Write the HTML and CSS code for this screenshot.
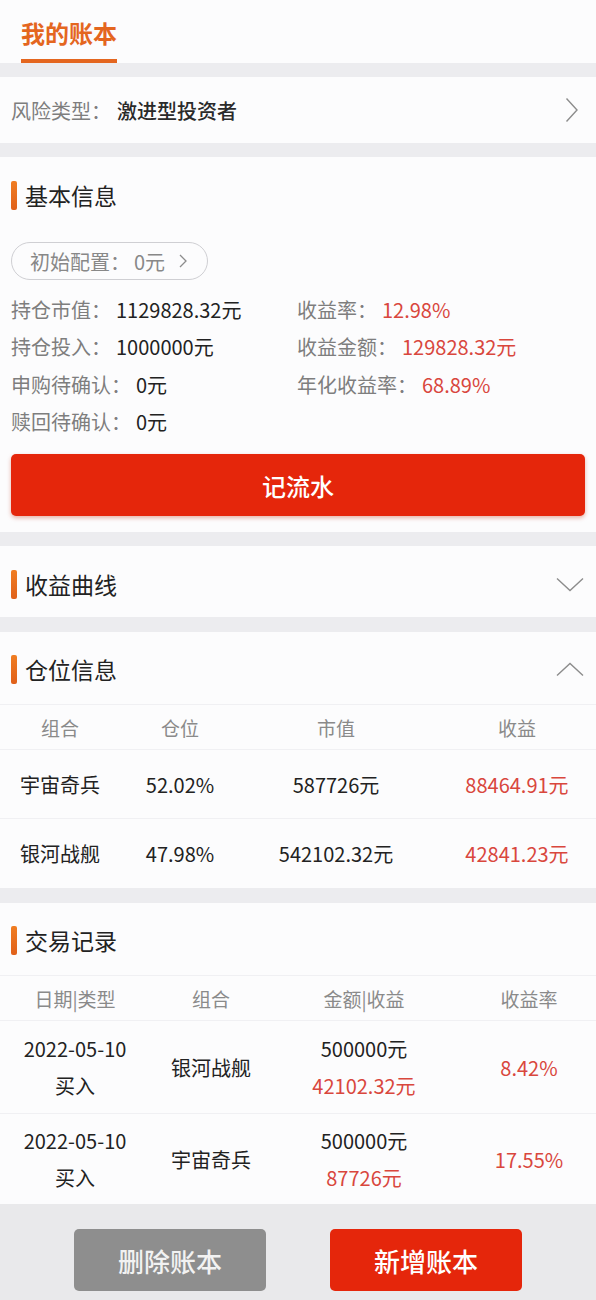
FILE: index.html
```html
<!DOCTYPE html>
<html lang="zh-CN">
<head>
<meta charset="utf-8">
<title>我的账本</title>
<link rel="stylesheet" href="styles.css">
</head>
<body>
<div class="tabs"><div class="tab">我的账本</div></div>

<div class="card risk">
  <div class="risk-text"><span class="label">风险类型：</span><span class="risk-value">激进型投资者</span></div>
  <svg class="chev-right" width="14" height="26" viewBox="0 0 14 26"><path d="M1.5 1.5 L12 13 L1.5 24.5" fill="none" stroke="#8c8c8c" stroke-width="1.4"/></svg>
</div>

<div class="card basic">
  <div class="sec-title"><span class="bar"></span>基本信息</div>
  <div class="pill">
    <span>初始配置：</span><span class="pill-val">0元</span>
    <svg width="8" height="14" viewBox="0 0 8 14"><path d="M1 1 L7 7 L1 13" fill="none" stroke="#8c8c8c" stroke-width="1.3"/></svg>
  </div>
  <div class="info-grid">
    <div class="info"><span class="label">持仓市值：</span><span class="val">1129828.32元</span></div>
    <div class="info"><span class="label">收益率：</span><span class="val red">12.98%</span></div>
    <div class="info"><span class="label">持仓投入：</span><span class="val">1000000元</span></div>
    <div class="info"><span class="label">收益金额：</span><span class="val red">129828.32元</span></div>
    <div class="info"><span class="label">申购待确认：</span><span class="val">0元</span></div>
    <div class="info"><span class="label">年化收益率：</span><span class="val red">68.89%</span></div>
    <div class="info"><span class="label">赎回待确认：</span><span class="val">0元</span></div>
  </div>
  <div class="btn-primary">记流水</div>
</div>

<div class="card fold">
  <div class="sec-title"><span class="bar"></span>收益曲线</div>
  <svg class="chev" width="28" height="15" viewBox="0 0 28 15"><path d="M1 1.5 L14 13.5 L27 1.5" fill="none" stroke="#8c8c8c" stroke-width="1.4"/></svg>
</div>

<div class="card">
  <div class="sec-head">
    <div class="sec-title"><span class="bar"></span>仓位信息</div>
    <svg class="chev" width="28" height="15" viewBox="0 0 28 15"><path d="M1 13.5 L14 1.5 L27 13.5" fill="none" stroke="#8c8c8c" stroke-width="1.4"/></svg>
  </div>
  <div class="ptable">
    <div class="prow head"><span>组合</span><span>仓位</span><span>市值</span><span class="c4">收益</span></div>
    <div class="prow"><span>宇宙奇兵</span><span>52.02%</span><span>587726元</span><span class="c4 red">88464.91元</span></div>
    <div class="prow last"><span>银河战舰</span><span>47.98%</span><span>542102.32元</span><span class="c4 red">42841.23元</span></div>
  </div>
</div>

<div class="card">
  <div class="sec-head">
    <div class="sec-title"><span class="bar"></span>交易记录</div>
  </div>
  <div class="ttable">
    <div class="trow head"><span>日期|类型</span><span>组合</span><span>金额|收益</span><span class="c4">收益率</span></div>
    <div class="trow r1">
      <div class="two"><span>2022-05-10</span><span>买入</span></div>
      <span>银河战舰</span>
      <div class="two"><span>500000元</span><span class="red">42102.32元</span></div>
      <span class="c4 red">8.42%</span>
    </div>
    <div class="trow r2">
      <div class="two"><span>2022-05-10</span><span>买入</span></div>
      <span>宇宙奇兵</span>
      <div class="two"><span>500000元</span><span class="red">87726元</span></div>
      <span class="c4 red">17.55%</span>
    </div>
  </div>
</div>

<div class="footer">
  <div class="btn btn-gray">删除账本</div>
  <div class="btn btn-red">新增账本</div>
</div>
</body>
</html>
```

FILE: styles.css
```css
* { box-sizing: border-box; margin: 0; padding: 0; }

body {
  width: 596px;
  background: #ececef;
  font-family: "Noto Sans CJK SC", "Noto Sans", sans-serif;
  color: #222;
  font-size: 20px;
}

.tabs {
  height: 63px;
  background: #fcfcfd;
  padding-left: 21px;
  display: flex;
  align-items: flex-start;
}

.tab {
  height: 63px;
  padding-top: 18px;
  font-size: 24px;
  line-height: 30px;
  font-weight: 700;
  color: #e4661f;
  border-bottom: 4px solid #e4661f;
}

.card {
  background: #fcfcfd;
  margin-top: 14px;
}

.label { color: #7e7e7e; }

.red { color: #d9473d; }

.risk {
  height: 66px;
  padding: 0 17px 0 11px;
  display: flex;
  align-items: center;
  justify-content: space-between;
}

.risk-text { display: flex; align-items: center; }
.risk-value { color: #2a2a2a; font-weight: 500; margin-left: 6px; }

.sec-title {
  display: flex;
  align-items: center;
  font-size: 23px;
  line-height: 30px;
  color: #222;
}

.bar {
  width: 6px;
  height: 29px;
  border-radius: 2px;
  background: linear-gradient(#f07d22, #e0601a);
  margin-right: 8px;
}

.basic {
  padding: 23px 11px 16px;
}

.pill {
  margin-top: 32px;
  width: 197px;
  height: 38px;
  border: 1px solid #cfcfd3;
  border-radius: 19px;
  padding-left: 18px;
  display: flex;
  align-items: center;
  color: #888;
  font-size: 20px;
}

.pill-val { margin-left: 4px; }
.pill svg { margin-left: 14px; }

.info-grid {
  margin-top: 11px;
  display: grid;
  grid-template-columns: 286px 1fr;
}

.info {
  line-height: 37.3px;
  height: 37.3px;
  white-space: nowrap;
}

.val { margin-left: 5px; }

.btn-primary {
  margin-top: 14px;
  height: 62px;
  border-radius: 5px;
  background: #e5260b;
  box-shadow: 0 2px 4px rgba(190, 40, 10, 0.35);
  color: #fff;
  font-size: 24px;
  font-weight: 500;
  display: flex;
  align-items: center;
  justify-content: center;
}

.fold {
  height: 71px;
  padding: 5px 12px 0 11px;
  display: flex;
  align-items: center;
  justify-content: space-between;
  margin-top: 14px;
}

.card + .card:not(.basic):not(.fold) { margin-top: 15px; }

.sec-head {
  height: 72px;
  padding: 2px 12px 0 11px;
  display: flex;
  align-items: center;
  justify-content: space-between;
}

.ptable, .ttable { border-top: 1px solid #f0f0f3; }

.prow {
  display: grid;
  grid-template-columns: 120px 120px 192px 1fr;
  height: 69px;
  align-items: center;
  text-align: center;
  border-bottom: 1px solid #f0f0f3;
  white-space: nowrap;
}

.prow.head {
  height: 45px;
  color: #8a8a8a;
  font-size: 19px;
}

.prow.last { border-bottom: none; }

.prow .c4 { padding-left: 6px; }

.trow {
  display: grid;
  grid-template-columns: 150px 122px 184px 1fr;
  align-items: center;
  text-align: center;
  border-bottom: 1px solid #f0f0f3;
  white-space: nowrap;
}

.trow.head {
  height: 45px;
  color: #8a8a8a;
  font-size: 19px;
}

.trow.r1 { height: 93px; }
.trow.r2 { height: 90px; border-bottom: none; }

.trow .c4 { padding-left: 6px; }

.two {
  display: flex;
  flex-direction: column;
  line-height: 37px;
}

.footer {
  height: 97px;
  background: #e9e9eb;
  padding-top: 25px;
  display: flex;
  justify-content: center;
  gap: 64px;
}

.btn {
  width: 192px;
  height: 62px;
  border-radius: 5px;
  display: flex;
  align-items: center;
  justify-content: center;
  font-size: 26px;
  font-weight: 500;
  color: #fff;
}

.btn-gray { background: #8e8e8e; color: #f2f2f2; }
.btn-red { background: #e5260b; }
```
